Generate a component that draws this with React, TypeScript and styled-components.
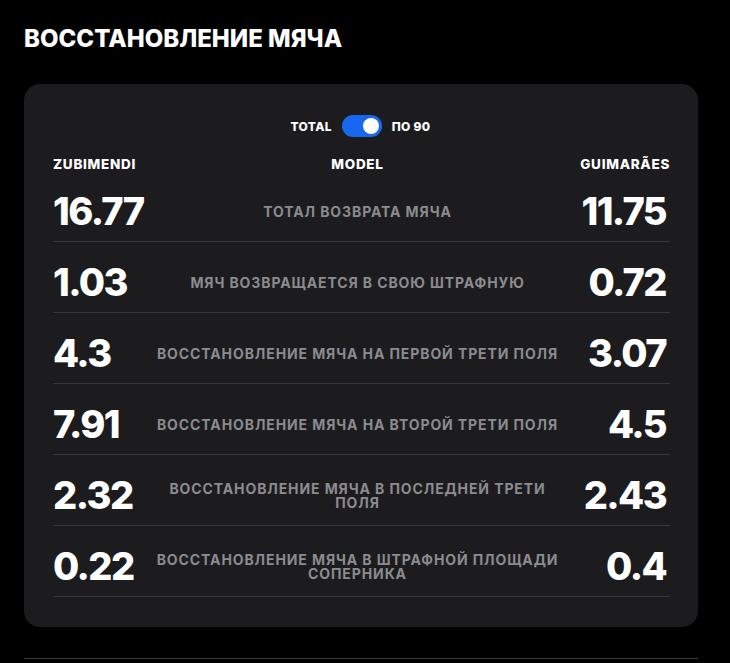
import styled, { createGlobalStyle } from 'styled-components'

const GlobalStyle = createGlobalStyle`
  html, body {
    margin: 0;
    background: #000;
  }
  body {
    font-family: Inter, 'Noto Sans', sans-serif;
    color: #fff;
  }
`

const rows = [
  { left: '16.77', label: 'Тотал возврата мяча', right: '11.75' },
  { left: '1.03', label: 'Мяч возвращается в свою штрафную', right: '0.72' },
  { left: '4.3', label: 'Восстановление мяча на первой трети поля', right: '3.07' },
  { left: '7.91', label: 'Восстановление мяча на второй трети поля', right: '4.5' },
  { left: '2.32', label: 'Восстановление мяча в последней трети поля', right: '2.43' },
  { left: '0.22', label: 'Восстановление мяча в штрафной площади соперника', right: '0.4' },
]

const Page = styled.div`
  width: 730px;
  padding: 25px 32px 0 24px;
  box-sizing: border-box;
`

const Title = styled.h2`
  margin: 0 0 31px;
  font-size: 24px;
  line-height: 28px;
  font-weight: 800;
  letter-spacing: 0;
  text-transform: uppercase;
`

const Card = styled.section`
  background: #1c1c1e;
  border-radius: 16px;
  padding: 31px 28px 30px 29px;
`

const ToggleRow = styled.div`
  display: flex;
  justify-content: center;
  align-items: center;
  gap: 10px;
  font-size: 12px;
  font-weight: 800;
  letter-spacing: 0.3px;
  height: 22px;
  margin-left: -2px;
`

const Switch = styled.span<{ $on: boolean }>`
  display: flex;
  align-items: center;
  justify-content: ${p => (p.$on ? 'flex-end' : 'flex-start')};
  width: 40px;
  height: 22px;
  padding: 0 3px;
  box-sizing: border-box;
  border-radius: 11px;
  background: ${p => (p.$on ? '#1767f0' : '#555')};
`

const Knob = styled.span`
  width: 16px;
  height: 16px;
  border-radius: 50%;
  background: #fff;
`

const Grid = styled.div`
  display: grid;
  grid-template-columns: 92px 1fr 100px;
  column-gap: 6px;
  align-items: center;
`

const HeadRow = styled(Grid)`
  margin-top: 20px;
  font-size: 13.5px;
  line-height: 14px;
  font-weight: 800;
  letter-spacing: 0.7px;
  text-transform: uppercase;
`

const HeadCell = styled.div<{ $align: 'left' | 'center' | 'right' }>`
  text-align: ${p => p.$align};
  white-space: nowrap;
`

const StatRow = styled(Grid)`
  padding: 20px 0 9px;
  border-bottom: 1px solid #36363a;
`

const Value = styled.div<{ $align: 'left' | 'right' }>`
  text-align: ${p => p.$align};
  font-size: 38px;
  line-height: 41px;
  font-weight: 800;
  letter-spacing: -1.6px;
  padding-right: ${p => (p.$align === 'right' ? '4px' : '0')};
`

const Label = styled.div`
  text-align: center;
  color: #8b8b90;
  font-size: 14px;
  line-height: 14px;
  font-weight: 700;
  letter-spacing: 0.9px;
  text-transform: uppercase;
`

const Rule = styled.hr`
  margin: 31px 0 0;
  border: none;
  border-top: 1px solid #3a3a3e;
`

export default function App() {
  return (
    <>
      <GlobalStyle />
      <Page>
        <Title>Восстановление мяча</Title>
        <Card>
          <ToggleRow>
            <span>TOTAL</span>
            <Switch $on>
              <Knob />
            </Switch>
            <span>ПО 90</span>
          </ToggleRow>
          <HeadRow>
            <HeadCell $align="left">Zubimendi</HeadCell>
            <HeadCell $align="center">Model</HeadCell>
            <HeadCell $align="right">Guimarães</HeadCell>
          </HeadRow>
          {rows.map(r => (
            <StatRow key={r.label}>
              <Value $align="left">{r.left}</Value>
              <Label>{r.label}</Label>
              <Value $align="right">{r.right}</Value>
            </StatRow>
          ))}
        </Card>
        <Rule />
      </Page>
    </>
  )
}
